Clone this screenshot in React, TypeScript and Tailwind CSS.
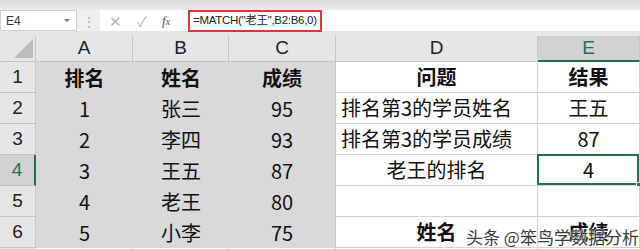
import React from 'react';

const cols = ['A', 'B', 'C', 'D', 'E'];

type Cell = { text: string; bold?: boolean; align?: 'left' | 'center' };

const rows: Cell[][] = [
  [{ text: '排名', bold: true }, { text: '姓名', bold: true }, { text: '成绩', bold: true }, { text: '问题', bold: true }, { text: '结果', bold: true }],
  [{ text: '1' }, { text: '张三' }, { text: '95' }, { text: '排名第3的学员姓名', align: 'left' }, { text: '王五' }],
  [{ text: '2' }, { text: '李四' }, { text: '93' }, { text: '排名第3的学员成绩', align: 'left' }, { text: '87' }],
  [{ text: '3' }, { text: '王五' }, { text: '87' }, { text: '老王的排名' }, { text: '4' }],
  [{ text: '4' }, { text: '老王' }, { text: '80' }, { text: '' }, { text: '' }],
  [{ text: '5' }, { text: '小李' }, { text: '75' }, { text: '姓名', bold: true }, { text: '成绩', bold: true }],
];

const font = "font-['Noto_Sans_CJK_SC','Noto_Sans',sans-serif]";

export default function App() {
  return (
    <div className={`relative w-[640px] h-[249px] overflow-hidden bg-[#e6e6e6] ${font}`}>
      {/* Top band */}
      <div className="h-[10px] bg-gradient-to-b from-[#d9d9d9] to-[#ececec]" />

      {/* Formula bar */}
      <div className="flex h-[21px] bg-[#efefef]">
        <div className="w-[77px] bg-white border border-[#d0d0d0] flex items-center justify-between pl-[5px] pr-[6px]">
          <span className="text-[12px] text-[#333] font-['Liberation_Sans',sans-serif]">E4</span>
          <span className="w-0 h-0 border-l-[3px] border-r-[3px] border-t-[3px] border-l-transparent border-r-transparent border-t-[#777]" />
        </div>
        <div className="w-[23px] flex items-center justify-center text-[#a8a8a8] text-[12px]">⋮</div>
        <div className="w-[82px] bg-white flex items-center">
          <span className="ml-[8px] w-[14px] text-center text-[#b5b5b5] text-[15px] leading-none">✕</span>
          <span className="ml-[13px] w-[14px] text-center text-[#b5b5b5] text-[14px] leading-none">✓</span>
          <span className="ml-[13px] text-[#555] text-[13px] italic font-['Liberation_Serif',serif] leading-none">f<span className="text-[10px]">x</span></span>
        </div>
        <div className="flex-1 bg-white flex items-center pl-[6px]">
          <div className="h-[22px] border-2 border-[#e0333a] flex items-center px-[3px] text-[11.5px] tracking-[-0.3px] text-[#222] whitespace-nowrap font-['Liberation_Sans','Noto_Sans_CJK_SC',sans-serif]">
            =MATCH("老王",B2:B6,0)
          </div>
        </div>
      </div>

      <div className="h-[5px]" />

      {/* Sheet grid */}
      <div className="grid grid-cols-[36px_97px_96px_107px_202px_102px] grid-rows-[26px_31px_31px_31px_31px_31px_31px_31px]">
        {/* Header row */}
        <div className="bg-[#e6e6e6] border-r border-b border-[#c6c6c6] flex items-end justify-end pr-[2px] pb-[3px]">
          <svg width="19" height="19">
            <polygon points="19,0 19,19 0,19" fill="#bdbdbd" />
          </svg>
        </div>
        {cols.map((c) => (
          <div
            key={c}
            className={`flex items-center justify-center text-[19px] font-['Liberation_Sans',sans-serif] border-r border-[#c6c6c6] ${
              c === 'E' ? 'bg-[#d2d2d2] text-[#217346] border-b-2 border-b-[#217346]' : 'bg-[#e6e6e6] text-[#222] border-b border-b-[#c6c6c6]'
            }`}
          >
            {c}
          </div>
        ))}

        {rows.map((r, i) => (
          <React.Fragment key={i}>
            <div
              className={`flex items-center justify-center text-[19px] font-['Liberation_Sans',sans-serif] border-b border-[#c6c6c6] ${
                i === 3 ? 'bg-[#d2d2d2] text-[#217346] border-r-2 border-r-[#217346]' : 'bg-[#e6e6e6] text-[#222] border-r border-r-[#c6c6c6]'
              }`}
            >
              {i + 1}
            </div>
            {r.map((cell, j) => {
              const shaded = j < 3;
              const selected = i === 3 && j === 4;
              return (
                <div
                  key={j}
                  className={`relative flex items-center text-[20px] text-[#111] whitespace-nowrap ${
                    cell.align === 'left' ? 'justify-start pl-[5px]' : 'justify-center'
                  } ${cell.bold ? 'font-bold' : ''} ${
                    shaded ? 'bg-[#d9d9d9]' : 'bg-white border-r border-b border-[#d4d4d4]'
                  } ${shaded && j === 2 ? 'border-r border-[#c6c6c6]' : ''}`}
                >
                  {cell.text}
                  {selected && (
                    <>
                      <div className="absolute -left-px -top-px right-0 bottom-0 border-2 border-[#217346]" />
                      <div className="absolute right-[-3px] bottom-[-3px] w-[6px] h-[6px] bg-[#217346] border border-white" />
                    </>
                  )}
                </div>
              );
            })}
          </React.Fragment>
        ))}

        {/* Row 7 top edge */}
        <div className="bg-[#e6e6e6] border-r border-[#c6c6c6]" />
        <div className="bg-white border-r border-[#d4d4d4]" />
        <div className="bg-white border-r border-[#d4d4d4]" />
        <div className="bg-white border-r border-[#d4d4d4]" />
        <div className="bg-white border-r border-[#d4d4d4]" />
        <div className="bg-white" />
      </div>

      {/* Watermark */}
      <div className="absolute left-[466px] top-[224px] text-[17px] text-[#3c3c3c] whitespace-nowrap [text-shadow:0_0_2px_#fff,0_0_2px_#fff]">
        头条 @笨鸟学数据分析
      </div>
    </div>
  );
}
